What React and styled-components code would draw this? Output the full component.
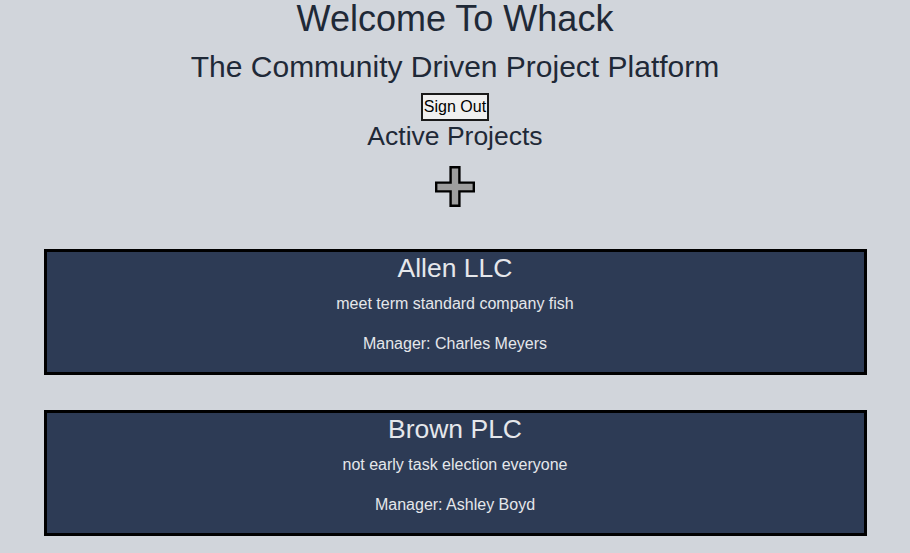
import React from "react";
import styled, { createGlobalStyle } from "styled-components";

const GlobalStyle = createGlobalStyle`
  html, body {
    margin: 0;
    padding: 0;
    background: #d1d5db;
  }
  body {
    font-family: "Liberation Sans", Arial, sans-serif;
    color: #1f2937;
  }
`;

const Page = styled.main`
  display: flex;
  flex-direction: column;
  align-items: center;
  text-align: center;
  padding-bottom: 40px;
`;

const Title = styled.h1`
  margin: 0;
  font-size: 36px;
  line-height: 38px;
  font-weight: 400;
  color: #1f2937;
`;

const Subtitle = styled.h2`
  margin: 12px 0 0;
  font-size: 30px;
  line-height: normal;
  font-weight: 400;
  color: #1f2937;
`;

const SignOutButton = styled.button`
  margin-top: 9px;
  font-family: "Liberation Sans", Arial, sans-serif;
  font-size: 16px;
  line-height: normal;
  color: #000;
  background: #f0f0f0;
  border: 2px solid #1a1a1a;
  padding: 3px 1px 3px;
  cursor: pointer;
`;

const SectionTitle = styled.h2`
  margin: 0;
  font-size: 26.5px;
  line-height: normal;
  font-weight: 400;
  color: #1f2937;
`;

const AddButton = styled.button`
  margin-top: 14px;
  padding: 0;
  border: none;
  background: transparent;
  cursor: pointer;
  display: flex;
  width: 40px;
  height: 41px;
`;

const CardList = styled.section`
  margin-top: 42px;
  width: 823px;
  display: flex;
  flex-direction: column;
  gap: 35px;
`;

const Card = styled.article`
  box-sizing: border-box;
  background: #2d3b55;
  border: 3px solid #000;
  padding: 1px 0 19px;
  color: #e5e7eb;
  display: flex;
  flex-direction: column;
  align-items: center;
`;

const CardTitle = styled.h3`
  margin: 0;
  font-size: 26.5px;
  line-height: normal;
  font-weight: 400;
  color: #e5e7eb;
`;

const CardText = styled.p`
  margin: ${(p) => p.$gap}px 0 0;
  font-size: 16px;
  line-height: normal;
  color: #e5e7eb;
`;

const PlusIcon = () => (
  <svg width="40" height="41" viewBox="0 0 40 41" aria-hidden="true">
    <polygon
      points="15.6,1.2 24.4,1.2 24.4,16.6 38.8,16.6 38.8,25.4 24.4,25.4 24.4,39.8 15.6,39.8 15.6,25.4 1.2,25.4 1.2,16.6 15.6,16.6"
      fill="#9e9e9e"
      stroke="#000"
      strokeWidth="2.4"
      strokeLinejoin="miter"
    />
  </svg>
);

const projects = [
  {
    name: "Allen LLC",
    description: "meet term standard company fish",
    manager: "Charles Meyers",
  },
  {
    name: "Brown PLC",
    description: "not early task election everyone",
    manager: "Ashley Boyd",
  },
];

export default function App() {
  return (
    <>
      <GlobalStyle />
      <Page>
        <Title>Welcome To Whack</Title>
        <Subtitle>The Community Driven Project Platform</Subtitle>
        <SignOutButton>Sign Out</SignOutButton>
        <SectionTitle>Active Projects</SectionTitle>
        <AddButton aria-label="Add project">
          <PlusIcon />
        </AddButton>
        <CardList>
          {projects.map((p) => (
            <Card key={p.name}>
              <CardTitle>{p.name}</CardTitle>
              <CardText $gap={11}>{p.description}</CardText>
              <CardText $gap={22}>Manager: {p.manager}</CardText>
            </Card>
          ))}
        </CardList>
      </Page>
    </>
  );
}
